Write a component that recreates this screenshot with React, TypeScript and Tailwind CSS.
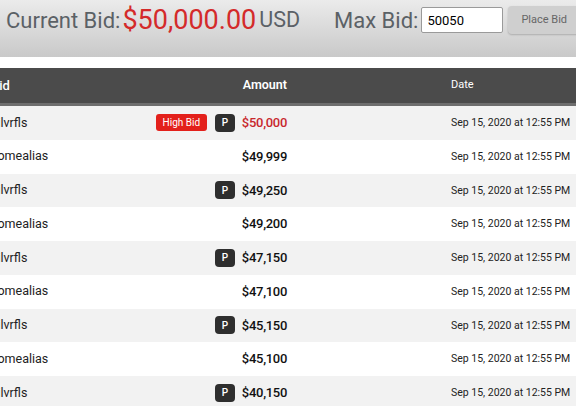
const bids = [
  { name: 'silvrfls', amount: '$50,000', high: true, proxy: true },
  { name: 'somealias', amount: '$49,999', high: false, proxy: false },
  { name: 'silvrfls', amount: '$49,250', high: false, proxy: true },
  { name: 'somealias', amount: '$49,200', high: false, proxy: false },
  { name: 'silvrfls', amount: '$47,150', high: false, proxy: true },
  { name: 'somealias', amount: '$47,100', high: false, proxy: false },
  { name: 'silvrfls', amount: '$45,150', high: false, proxy: true },
  { name: 'somealias', amount: '$45,100', high: false, proxy: false },
  { name: 'silvrfls', amount: '$40,150', high: false, proxy: true },
];

export default function App() {
  return (
    <div className="w-[576px] h-[406px] overflow-hidden bg-white font-['Roboto',sans-serif]">
      {/* Bid bar */}
      <div className="h-[57px] bg-gradient-to-b from-[#ebebeb] to-[#c9c9c9] flex items-start pt-[5px]">
        <div className="flex items-center h-[30px] pl-[6px] whitespace-nowrap">
          <span className="text-[22px] text-[#5b6166]">Current Bid:</span>
          <span className="text-[27px] text-[#d42a2a] ml-[2px] leading-none">$50,000.00</span>
          <span className="text-[21.5px] text-[#5b6166] ml-[3px]">USD</span>
          <span className="text-[22px] text-[#5b6166] ml-[34px]">Max Bid:</span>
          <input
            defaultValue="50050"
            className="ml-[3px] w-[82px] h-[26px] bg-white border border-[#9a9a9a] rounded-[2px] px-[5px] text-[13px] text-black outline-none"
          />
          <button className="ml-[5px] w-[80px] h-[28px] bg-[#cfcfcf] rounded-[4px] shadow-[0_1px_2px_rgba(0,0,0,0.2)] text-[11px] text-[#666] text-left pl-[13px]">
            Place Bid
          </button>
        </div>
      </div>

      {/* Bid table */}
      <div className="mt-[11px] -ml-[9px] w-[585px]">
        <div className="h-[38px] bg-[#4b4b4b] border-b-[3px] border-[#6e6e6e] flex items-center text-white">
          <div className="w-[296px] shrink-0 flex items-center">
            <span className="flex-1 text-[13px] font-medium">Bid</span>
            <span className="text-[12.5px] font-semibold">Amount</span>
          </div>
          <span className="pl-[164px] text-[11px] whitespace-nowrap">Date</span>
        </div>
        {bids.map((b, i) => (
          <div
            key={i}
            className={`h-[33.75px] flex items-center ${i % 2 === 0 ? 'bg-[#f2f2f2]' : 'bg-white'}`}
          >
            <div className="w-[296px] shrink-0 flex items-center">
              <span className="flex-1 text-[12.5px] text-[#222]">{b.name}</span>
              {b.high && (
                <span className="w-[51px] h-[17px] bg-[#e3201b] rounded-[3px] text-white text-[10px] flex items-center justify-center mr-[8px]">
                  High Bid
                </span>
              )}
              {b.proxy && (
                <span className="w-[20px] h-[18px] bg-[#2e2e2e] rounded-[4px] text-white text-[10px] font-medium flex items-center justify-center mr-[7px]">
                  P
                </span>
              )}
              <span
                className={`text-[13px] font-medium tracking-[-0.3px] ${b.high ? 'text-[#c8282d]' : 'text-[#111]'}`}
              >
                {b.amount}
              </span>
            </div>
            <span className="pl-[164px] text-[10.5px] text-[#222] whitespace-nowrap">Sep 15, 2020 at 12:55 PM</span>
          </div>
        ))}
      </div>
    </div>
  );
}
